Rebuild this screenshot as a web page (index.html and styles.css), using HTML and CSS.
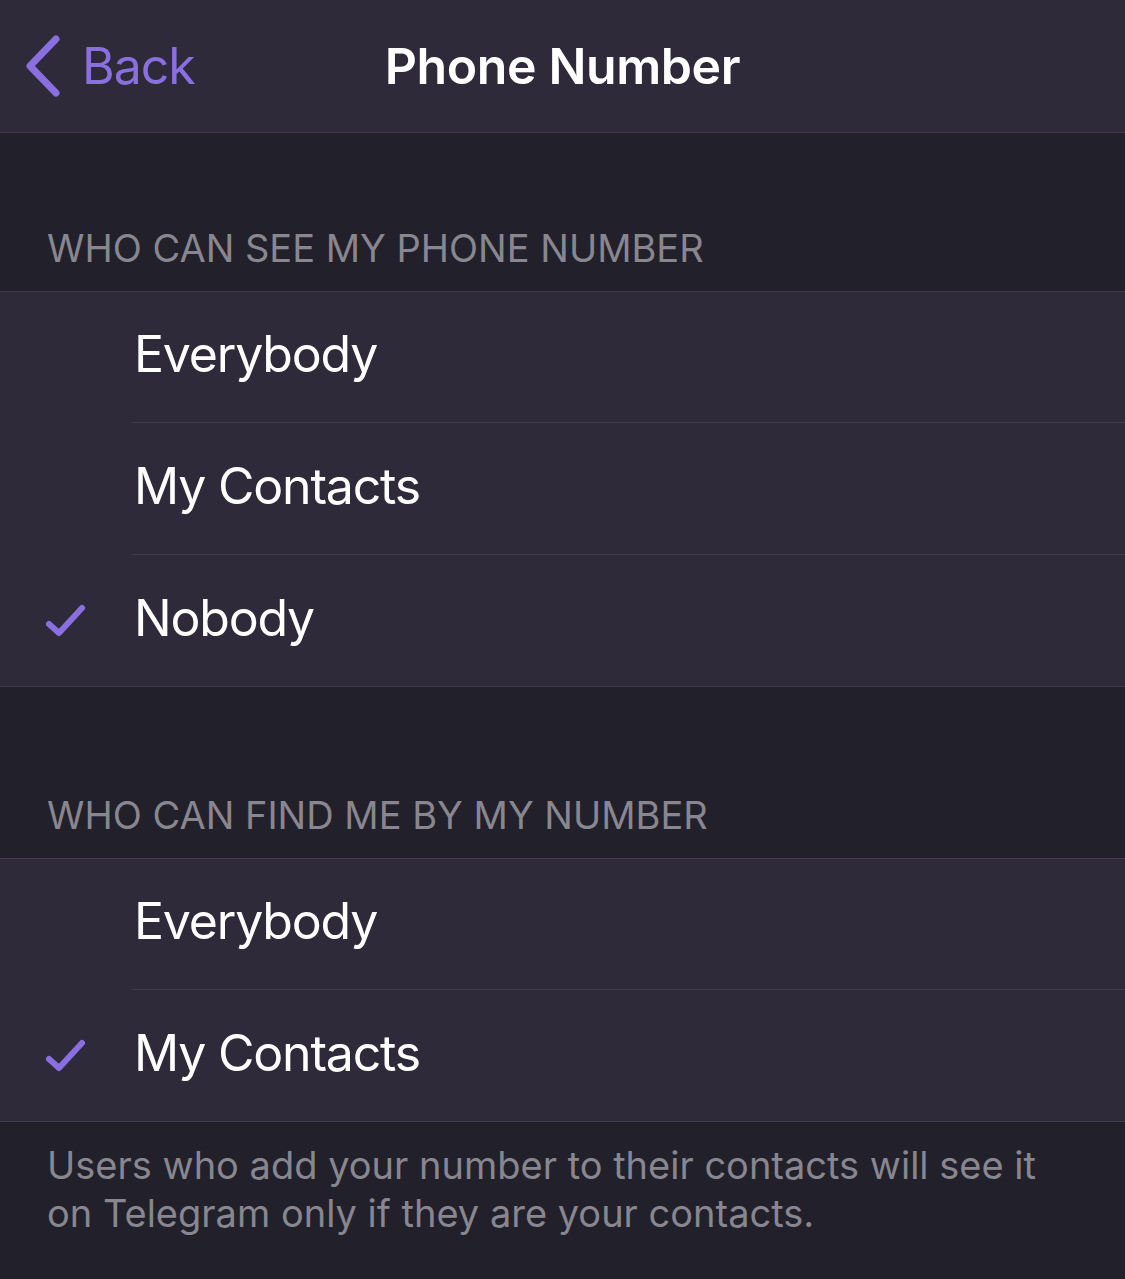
FILE: index.html
```html
<!DOCTYPE html>
<html>
  <head>
    <title>Phone Number</title>
    <meta name="viewport" content="width=device-width, initial-scale=1" />
    <link rel="stylesheet" href="styles.css">
  </head>

  <body>
    <div class="screen">
      <header class="nav">
        <a class="nav-back" href="#">
          <svg class="chevron" width="40" height="66" viewBox="0 0 40 66">
            <path d="M34 6 L8 33 L34 60" fill="none" stroke="#8a6fe0" stroke-width="7" stroke-linecap="round" stroke-linejoin="round" />
          </svg>
          <span>Back</span>
        </a>
        <h1 class="nav-title">Phone Number</h1>
        <div class="nav-spacer"></div>
      </header>

      <div class="section-header first">WHO CAN SEE MY PHONE NUMBER</div>
      <ul class="group">
        <li class="row"><span class="check"></span><span class="label">Everybody</span></li>
        <li class="row"><span class="check"></span><span class="label">My Contacts</span></li>
        <li class="row">
          <span class="check">
            <svg width="40" height="34" viewBox="0 0 40 34">
              <path d="M3 20 L13 29 L36 4" fill="none" stroke="#8a6fe0" stroke-width="6" stroke-linecap="round" stroke-linejoin="round" />
            </svg>
          </span>
          <span class="label">Nobody</span>
        </li>
      </ul>

      <div class="section-header">WHO CAN FIND ME BY MY NUMBER</div>
      <ul class="group">
        <li class="row"><span class="check"></span><span class="label">Everybody</span></li>
        <li class="row">
          <span class="check">
            <svg width="40" height="34" viewBox="0 0 40 34">
              <path d="M3 20 L13 29 L36 4" fill="none" stroke="#8a6fe0" stroke-width="6" stroke-linecap="round" stroke-linejoin="round" />
            </svg>
          </span>
          <span class="label">My Contacts</span>
        </li>
      </ul>

      <p class="footer-note">
        Users who add your number to their contacts will see it<br />
        on Telegram only if they are your contacts.
      </p>
    </div>
  </body>
</html>
```

FILE: styles.css
```css
*,
*:before,
*:after {
  box-sizing: border-box;
}

body {
  margin: 0;
  padding: 0;
  font-family: "Inter", "Liberation Sans", sans-serif;
  background: #22202b;
  color: #fff;
  -webkit-font-smoothing: antialiased;
}

.screen {
  width: 1125px;
  min-height: 1279px;
  background: #22202b;
}

/* navigation bar */
.nav {
  display: grid;
  grid-template-columns: 1fr auto 1fr;
  align-items: center;
  height: 133px;
  background: #2e2a3a;
  border-bottom: 1px solid #403c4d;
}

.nav-back {
  display: flex;
  align-items: center;
  gap: 20px;
  padding-left: 22px;
  color: #8a6fe0;
  text-decoration: none;
  font-size: 50px;
  letter-spacing: -1px;
}

.chevron {
  display: block;
}

.nav-title {
  margin: 0;
  font-size: 50px;
  font-weight: 600;
  letter-spacing: -0.4px;
}

/* sections */
.section-header {
  padding: 104px 40px 19px 47px;
  font-size: 38px;
  line-height: 48px;
  color: #88868f;
}

.section-header.first {
  padding-top: 91px;
}

.group {
  list-style: none;
  margin: 0;
  padding: 0;
  background: #2e2a3a;
  border-top: 1px solid #403c4d;
  border-bottom: 1px solid #403c4d;
}

.row {
  display: flex;
  align-items: center;
  height: 130px;
}

.row + .row {
  height: 132px;
  border-top: 1px solid #403c4d;
  margin-left: 132px;
}

.row + .row .check {
  margin-left: -132px;
}

.check {
  display: flex;
  align-items: center;
  width: 134px;
  padding-left: 46px;
  flex-shrink: 0;
}

.label {
  font-size: 50px;
  letter-spacing: -1.2px;
  padding-bottom: 6px;
}

.footer-note {
  margin: 0;
  padding: 19px 30px 0 47px;
  font-size: 38px;
  line-height: 48px;
  color: #88868f;
}
```
